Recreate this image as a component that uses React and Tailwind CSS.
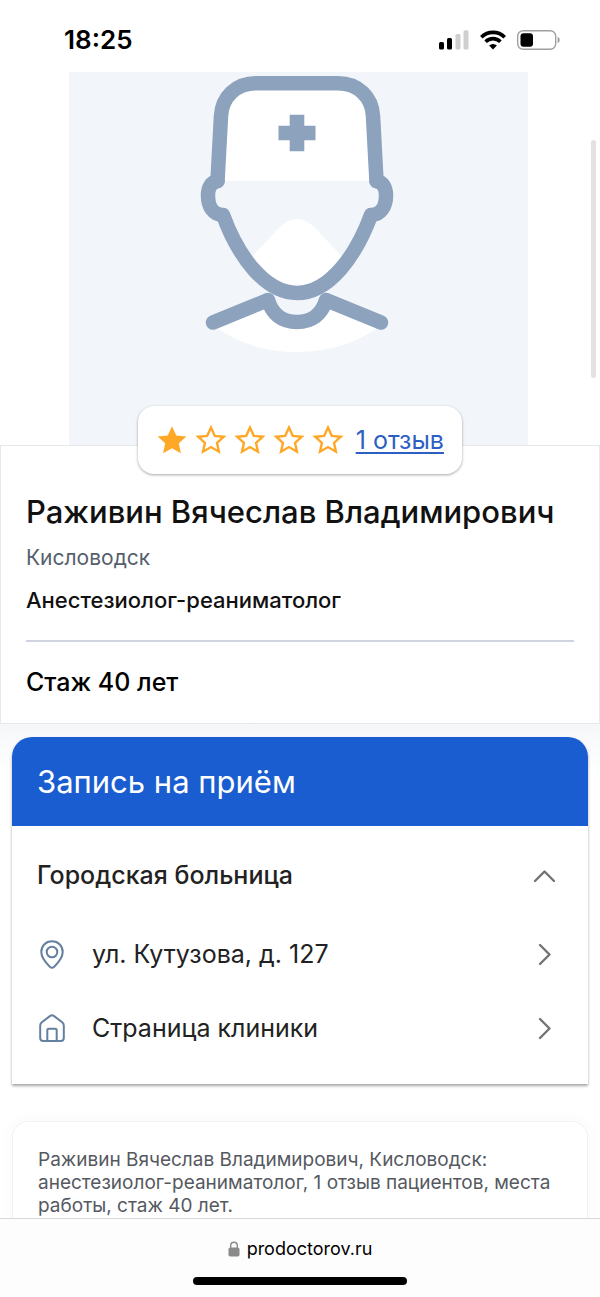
import React from 'react';

const STAR = 'M12 1.6l3.2 7 7.6.8-5.7 5.1 1.6 7.5-6.7-3.9L5.3 22l1.6-7.5L1.2 9.4l7.6-.8z';

const Star = ({ filled }) => (
    <svg viewBox="0 0 24 24" className="size-8 shrink-0" aria-hidden="true">
        <path
            d={STAR}
            fill={filled ? '#ffa726' : 'none'}
            stroke="#ffa726"
            strokeWidth={filled ? 0 : 2}
            transform={filled ? undefined : 'translate(1.3 1.2) scale(.89)'}
        />
    </svg>
);

const StatusBar = () => (
    <header className="flex h-[72px] items-center justify-between pt-2 pr-10 pl-16">
        <span className="text-[26px] leading-8 font-semibold text-black">18:25</span>
        <svg width="122" height="20" viewBox="0 0 122 20" aria-hidden="true">
            <rect x="1" y="12" width="5" height="7.5" rx="1.5" />
            <rect x="9" y="8" width="5" height="11.5" rx="1.5" />
            <rect x="17.5" y="4" width="5" height="15.5" rx="1.5" fill="#cfcfcf" />
            <rect x="25.5" y="0.3" width="5" height="19.2" rx="1.5" fill="#cfcfcf" />
            <g fill="none" stroke="#000" strokeWidth="3.6">
                <path d="M43.3 7.2a16.5 16.5 0 0 1 23.4 0" />
                <path d="M47.6 11.7a10.5 10.5 0 0 1 14.8 0" />
            </g>
            <path d="M55 19.5l-3.9-4a5.6 5.6 0 0 1 7.8 0z" />
            <rect x="79.7" y="0.7" width="38" height="18.6" rx="5.5" fill="none" stroke="#a0a0a0" strokeWidth="1.4" />
            <rect x="82.5" y="3.3" width="12.5" height="13.4" rx="3" />
            <path d="M119.6 6.7q2.2 1 2.2 3.3t-2.2 3.3z" fill="#a0a0a0" />
        </svg>
    </header>
);

const DoctorPicture = () => (
    <svg viewBox="0 0 459 373" className="block w-full bg-[#f2f6fb]" role="img" aria-label="Врач">
        <g transform="translate(-69 -72)">
            <path d="M218 181L221 117Q224 83 256 83H338Q370 83 373 117L376 181Z" fill="#fff" />
            <path d="M252 257L275 232Q297 206 319 232L342 257Q322 290 297 290T252 257Z" fill="#fff" />
            <path d="M214 326Q250 352 297 352T380 326L326 300C322 314 312 322 297 322S272 314 268 300Z" fill="#fff" />
            <g fill="none" stroke="#8da2bc" strokeWidth="14.5" strokeLinecap="round" strokeLinejoin="round">
                <path d="M217.5 181L221 116C222 97 236 83.3 256 83.3H338C358 83.3 372 97 373 116L376.5 181" />
                <path d="M217.5 181C211 182 208 188 208 195.5C208 206 213 215 223 215C238 256 265 293 297 293S356 256 371 215C381 215 386 206 386 195.5C386 188 383 182 376.5 181" />
                <path d="M213 322.5L268 300C272 314 282 322 297 322S322 314 326 300L381 322.5" />
            </g>
            <path d="M289.7 114.7H304.3V125.7H315.5V140.3H304.3V151.3H289.7V140.3H278.5V125.7H289.7Z" fill="#8da2bc" />
        </g>
    </svg>
);

const Chevron = ({ up }) => (
    <svg viewBox="0 0 24 24" className="size-6 shrink-0" fill="none" stroke="#737373" strokeWidth="2.4" strokeLinecap="round" strokeLinejoin="round" aria-hidden="true">
        <path d={up ? 'M3 17L12.5 7.5 22 17' : 'M8 2L17.500 11.500 8 21'} />
    </svg>
);

const PinIcon = () => (
    <svg viewBox="0 0 30 30" className="size-[30px] shrink-0" fill="none" stroke="#64809f" strokeWidth="2" aria-hidden="true">
        <path d="M15 1.3C8.5 1.3 4.3 6.1 4.3 12C4.3 17.5 8.5 22.5 12.8 26.7Q15 28.7 17.2 26.7C21.5 22.5 25.7 17.5 25.7 12C25.7 6.1 21.5 1.3 15 1.3Z" />
        <circle cx="15" cy="12" r="5.3" />
    </svg>
);

const HomeIcon = () => (
    <svg viewBox="0 0 30 30" className="size-[30px] shrink-0" fill="none" stroke="#64809f" strokeWidth="2" strokeLinejoin="round" aria-hidden="true">
        <path d="M3.2 11.5Q3.2 9.5 4.8 8.2L13.2 1.9Q15 0.6 16.8 1.9L25.2 8.2Q26.8 9.5 26.8 11.5V24Q26.8 27 23.8 27H6.2Q3.2 27 3.2 24Z" />
        <path d="M10.3 27V16.2Q10.3 14.7 11.8 14.7H18.2Q19.7 14.7 19.7 16.2V27" />
    </svg>
);

const clinicLinks = [
    { label: 'ул. Кутузова, д. 127', Icon: PinIcon },
    { label: 'Страница клиники', Icon: HomeIcon },
];

const DoctorCard = () => (
    <section className="relative border border-[#e6e8ec] bg-white px-[25px] pt-11 pb-[25px] text-[#111]">
        <div className="absolute -top-10 left-1/2 flex h-[68px] w-[324px] -translate-x-1/2 items-center justify-between rounded-2xl bg-white px-[18px] shadow-[0_1px_3px_rgba(0,0,0,0.35)]">
            <div className="flex gap-[7px]" role="img" aria-label="Оценка 1 из 5">
                {[1, 2, 3, 4, 5].map((n) => (
                    <Star key={n} filled={n === 1} />
                ))}
            </div>
            <a href="#reviews" className="text-[25px] leading-8 whitespace-nowrap text-[#2c5fc4] underline decoration-2 underline-offset-3">1 отзыв</a>
        </div>
        <h1 className="text-[31px] leading-11 font-medium whitespace-nowrap">Раживин Вячеслав Владимирович</h1>
        <p className="mt-2 text-[21px] leading-8 text-[#55606c]">Кисловодск</p>
        <p className="mt-[10px] text-[22px] leading-8 font-medium">Анестезиолог-реаниматолог</p>
        <hr className="mt-6 border-t-2 border-[#d0d3e2]" />
        <p className="mt-6 text-[25px] leading-8 font-medium text-black">Стаж 40 лет</p>
    </section>
);

const Booking = () => (
    <section className="rounded-t-[20px] shadow-[0_2px_3px_rgba(0,0,0,0.35)]">
        <h2 className="rounded-t-[20px] bg-[#1a5dd0] px-[25px] py-6 text-[31px] leading-[41px] text-white">Запись на приём</h2>
        <div className="bg-white pt-5 pb-[18px] text-[25px] text-[#222]">
            <button type="button" aria-expanded="true" className="flex h-15 w-full items-center justify-between pr-8 pl-[25px] text-left font-medium">
                Городская больница
                <Chevron up />
            </button>
            <ul className="pt-3">
                {clinicLinks.map(({ label, Icon }) => (
                    <li key={label}>
                        <a href="#clinic" className="flex h-[74px] items-center gap-[25px] pr-8 pl-[25px]">
                            <Icon />
                            <span className="flex-1">{label}</span>
                            <Chevron />
                        </a>
                    </li>
                ))}
            </ul>
        </div>
    </section>
);

const AddressBar = () => (
    <footer className="flex h-[79px] shrink-0 flex-col items-center justify-between border-t border-[#d8d8d8] bg-[#fdfdfe] pt-4 pb-3">
        <p className="flex items-center gap-[7px] text-[18px] leading-7 text-black">
            <svg width="12" height="16" viewBox="0 0 12 16" aria-hidden="true">
                <rect x="0.5" y="6.5" width="11" height="9" rx="1.8" fill="#8a8a8a" />
                <path d="M2.7 7.5V4.5a3.3 3.3 0 0 1 6.6 0V7.5" fill="none" stroke="#8a8a8a" strokeWidth="1.4" />
            </svg>
            prodoctorov.ru
        </p>
        <div className="h-2 w-[214px] rounded-full bg-black" />
    </footer>
);

export default function App() {
    return (
        <div className="relative flex min-h-screen flex-col bg-white font-['Inter',sans-serif]">
            <StatusBar />
            <main className="flex grow flex-col">
                <div className="pr-[72px] pl-[69px]">
                    <DoctorPicture />
                </div>
                <DoctorCard />
                <div className="flex grow flex-col gap-[37px] bg-linear-to-b from-[#f6f7f9] to-white to-10% px-3 pt-[13px]">
                    <Booking />
                    <section className="grow rounded-t-2xl border border-b-0 border-[#f2f2f4] bg-white px-[25px] pt-[26px] text-[19px] leading-[23px] text-[#55595f] shadow-[0_0_20px_rgba(0,0,0,0.03)]">
                        <p>Раживин Вячеслав Владимирович, Кисловодск: анестезиолог-реаниматолог, 1 отзыв пациентов, места работы, стаж 40 лет.</p>
                    </section>
                </div>
            </main>
            <AddressBar />
            <div className="absolute top-[140px] right-1 h-[238px] w-[5px] rounded-full bg-[#e2e2e2]" />
        </div>
    );
}
